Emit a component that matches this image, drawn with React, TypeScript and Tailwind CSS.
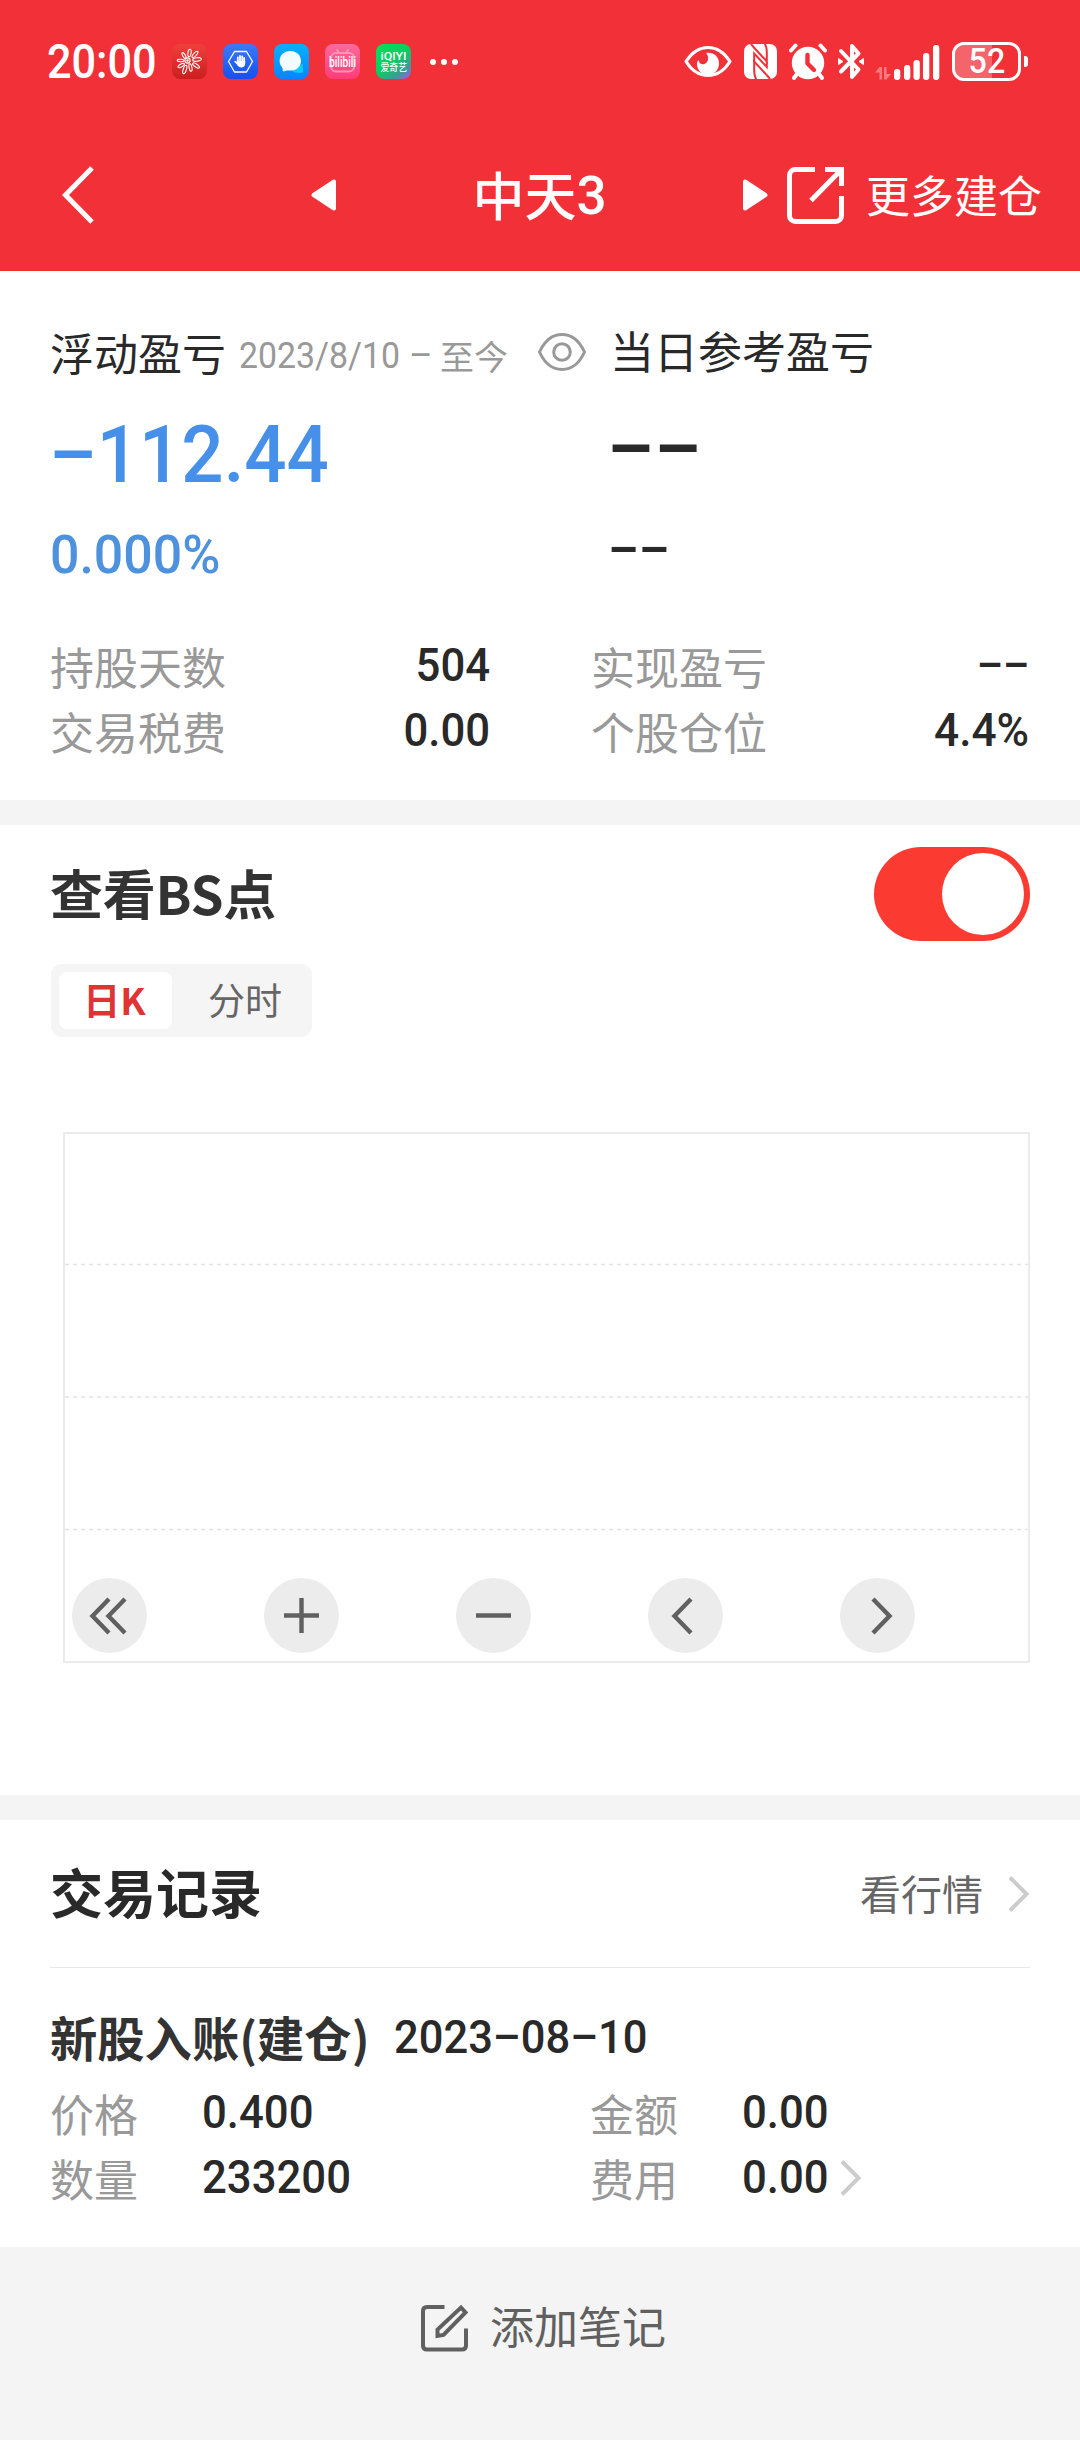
import React from 'react'

const BARS = [
  { x: 0, h: 11 },
  { x: 10, h: 15 },
  { x: 19.5, h: 20 },
  { x: 29, h: 27 },
  { x: 39, h: 35 }
]

const CHART_BUTTONS = [
  { name: 'rewind', d: 'M37 21 L20.5 38 L37 55 M53 21 L36.5 38 L53 55' },
  { name: 'zoom-in', d: 'M37.5 20 V55 M20 37.5 H55' },
  { name: 'zoom-out', d: 'M20 37.5 H55' },
  { name: 'prev', d: 'M43 21 L26.5 38 L43 55' },
  { name: 'next', d: 'M33 21 L49.5 38 L33 55' }
]

type NumProps = { children: React.ReactNode; className?: string }

// Digits are set slightly condensed
function Num({ children, className = '' }: NumProps) {
  return (
    <span className={`inline-block whitespace-nowrap font-[Roboto,sans-serif] font-medium ${className}`}>
      {children}
    </span>
  )
}

function ChevronRight() {
  return (
    <svg width="22" height="36" viewBox="0 0 22 36" fill="none" stroke="#cccccc" strokeWidth="4">
      <path d="M2 1.5 L18.5 18 L2 34.5" />
    </svg>
  )
}

function StatusBar() {
  return (
    <div className="flex h-[123px] items-center justify-between pl-[47px] pr-[52px] text-white">
      <div className="flex items-center">
        <Num className="w-[125px] origin-left scale-x-[0.9] text-[48px] leading-none">20:00</Num>
        <div className="flex items-center gap-4">
          {/* Huawei */}
          <svg width="35" height="35" viewBox="0 0 35 35">
            <defs>
              <linearGradient id="hw" x1="0" y1="0" x2="0" y2="1">
                <stop offset="0" stopColor="#f0403c" />
                <stop offset="1" stopColor="#c91f1f" />
              </linearGradient>
            </defs>
            <rect width="35" height="35" rx="8" fill="url(#hw)" />
            <g fill="none" stroke="#ffffff" strokeWidth="1.1">
              <ellipse cx="17.5" cy="9" rx="1.6" ry="3.8" transform="rotate(8 17.5 9)" />
              <ellipse cx="23" cy="10.5" rx="1.5" ry="4" transform="rotate(42 23 10.5)" />
              <ellipse cx="25" cy="15.5" rx="4.4" ry="1.7" transform="rotate(-8 25 15.5)" />
              <ellipse cx="24" cy="21.5" rx="4" ry="1.5" transform="rotate(35 24 21.5)" />
              <ellipse cx="18.5" cy="23.5" rx="1.4" ry="3.8" transform="rotate(-12 18.5 23.5)" />
              <ellipse cx="12.8" cy="25.5" rx="1.6" ry="4.4" transform="rotate(18 12.8 25.5)" />
              <ellipse cx="9.2" cy="21.5" rx="3.6" ry="1.4" transform="rotate(-30 9.2 21.5)" />
              <ellipse cx="8.6" cy="16.5" rx="3.4" ry="1.2" transform="rotate(5 8.6 16.5)" />
              <ellipse cx="12" cy="11.5" rx="1.3" ry="3.2" transform="rotate(-30 12 11.5)" />
              <circle cx="15.5" cy="16.5" r="2.6" />
              <circle cx="15.5" cy="16.5" r="0.7" />
            </g>
          </svg>
          {/* Hand in hexagon */}
          <svg width="35" height="35" viewBox="0 0 35 35">
            <defs>
              <linearGradient id="hand" x1="0" y1="0" x2="0" y2="1">
                <stop offset="0" stopColor="#3b7bf8" />
                <stop offset="1" stopColor="#1450f0" />
              </linearGradient>
            </defs>
            <rect width="35" height="35" rx="8" fill="url(#hand)" />
            <path d="M11.5 7.5 H23.5 L29.5 17.5 L23.5 28 H11.5 L5.5 17.5 Z" fill="none" stroke="#fff" strokeWidth="1.3" strokeLinejoin="round" />
            <g stroke="#fff" strokeWidth="1.8" strokeLinecap="round">
              <path d="M14.8 18 V13.4 M17 18 V12 M19.2 18 V12.3 M21.2 18 V14" />
              <path d="M12.2 17.6 L15.5 20.5" />
            </g>
            <path d="M13.8 17 H22.2 V19.5 C22.2 22 20.5 23.4 18 23.4 C15.5 23.4 14.6 21.5 13.8 20 Z" fill="#fff" />
          </svg>
          {/* Chat */}
          <svg width="35" height="35" viewBox="0 0 35 35">
            <defs>
              <linearGradient id="chat" x1="0" y1="0" x2="0" y2="1">
                <stop offset="0" stopColor="#05b1ff" />
                <stop offset="1" stopColor="#0785ff" />
              </linearGradient>
            </defs>
            <rect width="35" height="35" rx="8" fill="url(#chat)" />
            <path d="M28.5 20 C29 24 29 26.5 29 28.5 C26 29.2 21 29.5 18 26.5 Z" fill="#05ccff" />
            <path d="M16.3 7 C22.5 7 27 11.3 27 17 C27 22.7 22.5 26.6 16.3 26.6 C14.6 26.6 13 26.4 11.5 27 C10 27.6 8.6 27.2 8.6 26.4 C9 25 8.6 24.3 7.6 22.8 C6.2 21 5.6 19 5.6 17 C5.6 11.3 10.1 7 16.3 7 Z" fill="#f2fbff" />
          </svg>
          {/* bilibili */}
          <svg className="overflow-visible" width="35" height="35" viewBox="0 0 35 35">
            <defs>
              <linearGradient id="bili" x1="0" y1="0" x2="0" y2="1">
                <stop offset="0" stopColor="#ff6a9b" />
                <stop offset="1" stopColor="#ff3b78" />
              </linearGradient>
            </defs>
            <rect width="35" height="35" rx="8" fill="url(#bili)" />
            <g fill="none" stroke="#ff94b8" strokeWidth="2" strokeLinecap="round">
              <rect x="6" y="9" width="23" height="18.5" rx="5" />
              <path d="M12 6 L14 9 M23 6 L21 9" />
            </g>
            <text x="4" y="23" textLength="27" lengthAdjust="spacingAndGlyphs" fill="#fff" fontFamily="Roboto, sans-serif" fontWeight="500" fontSize="14">bilibili</text>
          </svg>
          {/* iQIYI */}
          <svg className="overflow-visible" width="35" height="35" viewBox="0 0 35 35">
            <defs>
              <linearGradient id="iqiyi" x1="0.2" y1="0" x2="1" y2="1">
                <stop offset="0" stopColor="#06dd59" />
                <stop offset="0.45" stopColor="#0ccb62" />
                <stop offset="0.75" stopColor="#3d9a9b" />
                <stop offset="1" stopColor="#b04df0" />
              </linearGradient>
            </defs>
            <rect width="35" height="35" rx="8" fill="url(#iqiyi)" />
            <text x="4.5" y="16" textLength="26" lengthAdjust="spacingAndGlyphs" fill="#fff" fontFamily="Roboto, sans-serif" fontWeight="500" fontSize="11">iQIYI</text>
            <text x="4.5" y="26.5" textLength="26.5" lengthAdjust="spacingAndGlyphs" fill="#fff" fontFamily="Noto Sans CJK SC, sans-serif" fontWeight="500" fontSize="10">爱奇艺</text>
          </svg>
        </div>
        <svg className="ml-[19px]" width="28" height="6" viewBox="0 0 28 6" fill="#fff">
          <circle cx="3" cy="3" r="3" />
          <circle cx="14" cy="3" r="3" />
          <circle cx="25" cy="3" r="3" />
        </svg>
      </div>

      <div className="flex items-center">
        {/* Eye comfort */}
        <svg className="mr-3" width="48" height="35" viewBox="0 0 48 35">
          <path d="M2 17.5 C8 8 15 3.5 24 3.5 C33 3.5 40 8 46 17.5 C40 27 33 31.5 24 31.5 C15 31.5 8 27 2 17.5 Z" fill="none" stroke="#fff" strokeWidth="3.2" strokeLinejoin="round" />
          <path d="M22 9 C30 8 35 13 35 19.5 C35 26 30 31 24 31 C17.5 31 13 26 13 20 C13 18.5 13.5 17 14.5 16 C15 19 17 20.5 19.5 20.2 C23 19.6 24.5 16 24 13 C23.8 11.2 23 10 22 9 Z" fill="#fff" />
        </svg>
        {/* NFC */}
        <svg className="mr-3" width="33" height="35" viewBox="0 0 33 35">
          <rect width="33" height="35" rx="7" fill="#fff" />
          <g fill="none" stroke="#f23038" strokeWidth="2">
            <path d="M7 0 C8.5 2 10 3.5 12 5.8 L22.8 17.5 V8 C22.8 4 22 1.5 20.5 -1" />
            <path d="M26 35 C24.5 33 23 31.5 21 29.2 L10.2 17.5 V27 C10.2 31 11 33.5 12.5 36" />
            <path d="M10.2 18 V9.5 L22.8 23 V18" />
          </g>
        </svg>
        {/* Alarm */}
        <svg className="mr-[11px]" width="38" height="37" viewBox="0 0 38 37">
          <circle cx="19" cy="20" r="16.2" fill="#fff" />
          <g stroke="#fff" strokeWidth="4" strokeLinecap="round">
            <path d="M2 7.5 L6.5 2.5 M36 7.5 L31.5 2.5 M8 31 L5 35 M30 31 L33 35" />
          </g>
          <path d="M18.5 12 V20.5 L25 27" fill="none" stroke="#f23038" strokeWidth="4.4" strokeLinecap="round" strokeLinejoin="round" />
        </svg>
        {/* Bluetooth */}
        <svg className="mr-[11px]" width="26" height="37" viewBox="0 0 26 37">
          <path d="M3 8 L20.5 26.5 L14 34 V3 L20.5 10.5 L3 28.5" fill="none" stroke="#fff" strokeWidth="4" strokeLinecap="round" strokeLinejoin="round" />
          <path d="M0.5 15.5 L5 18.5 L0.5 21.5 Z M25.5 15.5 L21 18.5 L25.5 21.5 Z" fill="#fff" stroke="#fff" strokeLinejoin="round" />
        </svg>
        {/* Data arrows */}
        <svg className="mr-[3px] mt-6" width="16" height="13" viewBox="0 0 16 13" fill="#ff7a80">
          <path d="M4.5 0 H7 V12.5 H4.5 V5.5 H0 Z M9 0 H11.5 V7 H16 L11.5 12.5 H9 Z" />
        </svg>
        {/* Signal */}
        <svg className="mr-3" width="46" height="36" viewBox="0 0 46 36" fill="#fff">
          {BARS.map((b) => (
            <rect key={b.x} x={b.x} y={36 - b.h} width="6.3" height={b.h} rx="3" />
          ))}
        </svg>
        {/* Battery */}
        <div className="flex h-[39px] w-[69px] items-center justify-center rounded-[12px] border-[3px] border-white bg-[linear-gradient(to_right,#f4646a_59%,transparent_59%)] bg-clip-padding">
          <Num className="scale-x-[0.92] text-[35px] leading-none">52</Num>
        </div>
        <div className="ml-[3px] h-[11px] w-[4px] rounded-r-[3px] bg-white" />
      </div>
    </div>
  )
}

function NavBar() {
  return (
    <div className="flex h-[148px] items-center pb-[3px] pl-[62px] pr-[38px] text-white">
      <svg className="mb-px" width="33" height="58" viewBox="0 0 33 58" fill="none" stroke="#fff" strokeWidth="5">
        <path d="M30 2 L3.5 29 L30 56" />
      </svg>
      <svg className="mb-px ml-[216px]" width="25" height="32" viewBox="0 0 25 32">
        <path d="M23 2.5 V29.5 L2.5 16 Z" fill="#fff" stroke="#fff" strokeWidth="4" strokeLinejoin="round" />
      </svg>
      <div className="mb-[4px] flex w-[407px] items-center justify-center text-[52px] font-medium leading-none">
        中天<Num className="mt-[5px] text-[53px] leading-none">3</Num>
      </div>
      <svg className="mb-px" width="25" height="32" viewBox="0 0 25 32">
        <path d="M2 2.5 V29.5 L22.5 16 Z" fill="#fff" stroke="#fff" strokeWidth="4" strokeLinejoin="round" />
      </svg>
      <svg className="mb-px ml-[19px]" width="57" height="57" viewBox="0 0 57 57" fill="none" stroke="#fff" strokeWidth="5">
        <path d="M28 2.5 H8.5 C5 2.5 2.5 5 2.5 8.5 V48.5 C2.5 52 5 54.5 8.5 54.5 H48.5 C52 54.5 54.5 52 54.5 48.5 V29" />
        <path d="M38 2.5 H54.5 V19" />
        <path d="M24 33.5 L53.5 3.5" />
      </svg>
      <span className="mb-[4px] ml-[22px] text-[44px] leading-none">更多建仓</span>
    </div>
  )
}

function Summary() {
  const stats = [
    ['持股天数', '504', '实现盈亏', '––'],
    ['交易税费', '0.00', '个股仓位', '4.4%']
  ]
  return (
    <section className="h-[529px] px-[50px] pt-[51px]">
      <div className="grid grid-cols-[560px_1fr]">
        <div>
          <div className="flex h-[60px] items-center text-[#292929]">
            <span className="text-[44px] leading-none">浮动盈亏</span>
            <div className="ml-[13px] mt-[7px] flex w-[299px] items-center text-[#999]">
              <span className="inline-block w-[170px] origin-left scale-x-[0.94] whitespace-nowrap font-[Roboto] text-[36px] leading-none">2023/8/10</span>
              <span className="inline-block w-[31px] font-[Roboto] text-[36px] leading-none">–</span>
              <span className="text-[34px] leading-none">至今</span>
            </div>
          </div>
          <div className="h-[120px] pt-[27px] text-[#4790e9]">
            <Num className="-ml-px origin-left scale-x-[0.93] text-[80px] leading-[92px]">–112.44</Num>
          </div>
          <div className="h-[84px] pt-[21px] text-[#4e92de]">
            <Num className="origin-left scale-x-[0.96] text-[54px] leading-[64px]">0.000%</Num>
          </div>
        </div>
        <div className="relative text-[#292929]">
          <svg className="absolute -left-[73px] top-[10px]" width="50" height="40" viewBox="0 0 50 40" fill="none" stroke="#999" strokeWidth="3">
            <path d="M2.5 20 C8 8 16 2.5 25 2.5 C34 2.5 42 8 47.5 20 C42 32 34 37.5 25 37.5 C16 37.5 8 32 2.5 20 Z" />
            <circle cx="25" cy="20" r="8.3" />
          </svg>
          <div className="flex h-[56px] items-center text-[44px] leading-none">当日参考盈亏</div>
          <div className="h-[124px] pt-[25px]">
            <Num className="-ml-[3px] origin-left scale-x-[0.92] text-[80px] leading-[92px]">––</Num>
          </div>
          <div className="h-[84px] pt-[16px]">
            <Num className="-ml-[2px] origin-left scale-x-[0.89] text-[54px] leading-[64px]">––</Num>
          </div>
        </div>
      </div>
      <div className="mt-[47px]">
        {stats.map(([a, av, b, bv]) => (
          <div key={a} className="grid h-[65px] grid-cols-[440px_438px] items-center gap-[101px] text-[44px] leading-none">
            <div className="flex items-center justify-between text-[#999]">
              {a}
              <Num className="-mt-[2px] origin-right scale-x-[0.93] text-[47px] text-[#292929]">{av}</Num>
            </div>
            <div className="flex items-center justify-between text-[#999]">
              {b}
              <Num className={`-mt-[2px] origin-right text-[47px] text-[#292929] ${bv === '––' ? 'scale-x-[0.87]' : 'scale-x-[0.94]'}`}>{bv}</Num>
            </div>
          </div>
        ))}
      </div>
    </section>
  )
}

function BSChart() {
  return (
    <section className="h-[970px] px-[50px] pt-[22px]">
      <div className="flex h-[94px] items-center justify-between">
        <h2 className="mb-[4px] text-[53px] font-bold leading-none tracking-[-0.2px] text-[#333]">查看BS点</h2>
        <div className="flex h-[94px] w-[156px] items-center justify-end rounded-full bg-[#fb3b31] pr-[6px]">
          <div className="h-[82px] w-[82px] rounded-full bg-white" />
        </div>
      </div>

      <div className="ml-px mt-[23px] flex h-[73px] w-[261px] items-center rounded-[11px] bg-[#f5f5f5] px-2 text-[37px] leading-none">
        <div className="flex h-[57px] w-[113px] items-center justify-center rounded-[8px] bg-white pb-[2px] pr-[2px] font-bold text-[#e03434]">日K</div>
        <div className="flex flex-1 items-center justify-center pb-[3px] pl-[14px] text-[#666]">分时</div>
      </div>

      {/* Empty K-line area, the controls sit on its bottom edge */}
      <div className="relative ml-[13px] mt-[95px] h-[531px] w-[967px] border-2 border-[#ebebeb]">
        <svg className="absolute left-0 top-0" width="963" height="527" stroke="#e4e4e4" strokeWidth="1.5" strokeDasharray="4 4">
          <path d="M0 130.5 H963 M0 263 H963 M0 395.5 H963" />
        </svg>
        <div className="absolute bottom-[8px] left-[7px] flex gap-[117px]">
          {CHART_BUTTONS.map((b) => (
            <button key={b.name} className="h-[75px] w-[75px] rounded-full bg-[#ececec]">
              <svg width="75" height="75" viewBox="0 0 75 75" fill="none" stroke="#606060" strokeWidth="4.4">
                <path d={b.d} />
              </svg>
            </button>
          ))}
        </div>
      </div>
    </section>
  )
}

function Records() {
  return (
    <section className="h-[427px] px-[50px]">
      <div className="flex h-[148px] items-center justify-between border-b border-[#e8e8e8]">
        <h2 className="mb-[4px] text-[53px] font-bold leading-none text-[#292929]">交易记录</h2>
        <div className="flex items-center text-[41px] leading-none text-[#666]">
          <span className="mb-[3px] mr-[25px]">看行情</span>
          <ChevronRight />
        </div>
      </div>
      <div className="mt-[37px] flex h-[64px] items-center">
        <span className="text-[47.3px] font-bold leading-none text-[#333]">新股入账(建仓)</span>
        <Num className="-mt-[2px] ml-[24px] origin-left scale-x-[0.925] text-[47px] leading-none text-[#292929]">2023–08–10</Num>
      </div>
      <div className="mt-[11px] grid grid-cols-[540px_1fr] text-[44px] leading-none text-[#999]">
        {[
          ['价格', '0.400'],
          ['金额', '0.00'],
          ['数量', '233200'],
          ['费用', '0.00']
        ].map(([label, value]) => (
          <div key={label} className="flex h-[65px] items-center">
            <span className="w-[152px]">{label}</span>
            <Num className="-mt-[2px] origin-left scale-x-[0.93] text-[47px] text-[#292929]">{value}</Num>
            {label === '费用' && (
              <span className="ml-[5px]">
                <ChevronRight />
              </span>
            )}
          </div>
        ))}
      </div>
    </section>
  )
}

export default function App() {
  return (
    <div className="flex h-[2440px] w-[1080px] flex-col overflow-hidden bg-[#f4f4f4] font-['Noto_Sans_CJK_SC',sans-serif]">
      <header className="h-[271px] bg-[#f23038]">
        <StatusBar />
        <NavBar />
      </header>
      <div className="bg-white">
        <Summary />
      </div>
      <div className="mt-[25px] bg-white">
        <BSChart />
      </div>
      <div className="mt-[25px] bg-white">
        <Records />
      </div>

      <footer className="flex flex-1 items-start justify-center pl-[6px] pt-[57px] text-[#606060]">
        <svg width="49" height="49" viewBox="0 0 49 49" fill="none" stroke="#606060" strokeWidth="4">
          <path d="M24.5 3 H7 C4.5 3 3 4.5 3 7 V41.5 C3 44 4.5 45.5 7 45.5 H42 C44.5 45.5 46 44 46 41.5 V24.5" />
          <path d="M17.5 32 V25.5 L41 3.5 L45.5 8.5 L23.5 31 Z" />
        </svg>
        <span className="-mt-px ml-[21px] text-[44px] leading-none">添加笔记</span>
      </footer>
    </div>
  )
}
